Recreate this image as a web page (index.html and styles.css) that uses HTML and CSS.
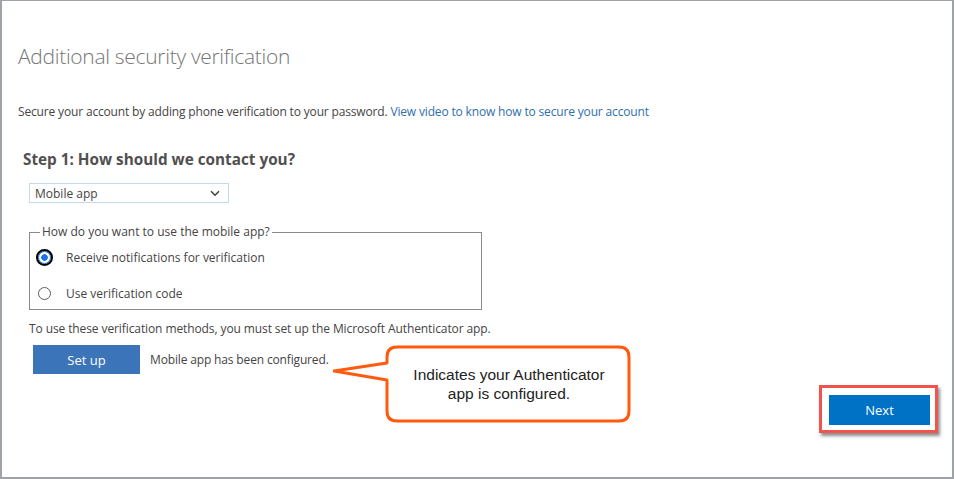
FILE: index.html
```html
<!DOCTYPE html>
<html lang="en">
<head>
<meta charset="utf-8">
<title>Additional security verification</title>
<link rel="stylesheet" href="styles.css">
</head>
<body>
<div class="frame">
  <h1 class="title">Additional security verification</h1>
  <p class="intro">Secure your account by adding phone verification to your password. <a href="#" class="link">View video to know how to secure your account</a></p>
  <div class="step">
    <h2 class="step-title">Step 1: How should we contact you?</h2>
    <div class="select">
      <span>Mobile app</span>
      <svg class="chev" width="10" height="7" viewBox="0 0 10 7"><path d="M1 1.2 L5 5.2 L9 1.2" fill="none" stroke="#444" stroke-width="1.6"/></svg>
    </div>
    <fieldset class="methods">
      <legend class="legend">How do you want to use the mobile app?</legend>
      <label class="option"><input type="radio" name="m" class="radio radio-on" checked> <span>Receive notifications for verification</span></label>
      <label class="option"><input type="radio" name="m" class="radio"> <span>Use verification code</span></label>
    </fieldset>
    <p class="note">To use these verification methods, you must set up the Microsoft Authenticator app.</p>
    <div class="setup-row">
      <button class="btn-setup">Set up</button>
      <span class="status">Mobile app has been configured.</span>
    </div>
  </div>
  <div class="footer">
    <div class="highlight"><button class="btn-next">Next</button></div>
  </div>
  <div class="callout">
    <svg class="callout-shape" width="300" height="82" viewBox="0 0 300 82">
      <path d="M64 2 H286 Q296 2 296 12 V66 Q296 76 286 76 H64 Q54 76 54 66 V35 L1 26 L54 18 V12 Q54 2 64 2 Z" fill="#fff" stroke="#ff5a0d" stroke-width="3" stroke-linejoin="round"/>
    </svg>
    <div class="callout-text">Indicates your Authenticator<br>app is configured.</div>
  </div>
</div>
</body>
</html>
```

FILE: styles.css
```css
html, body {
  margin: 0;
  padding: 0;
  background: #fff;
}
.frame {
  position: relative;
  box-sizing: border-box;
  width: 954px;
  height: 479px;
  border-top: 1px solid #9ea3a8;
  border-left: 2px solid #9ea3a8;
  border-right: 2px solid #9ea3a8;
  border-bottom: 2px solid #9ea3a8;
  padding: 0 0 0 16px;
  font-family: "Open Sans", "Noto Sans", sans-serif;
  color: #444;
}
.title {
  margin: 40px 0 0 0;
  font-size: 21px;
  line-height: 30px;
  font-weight: 300;
  letter-spacing: -0.3px;
  color: #767676;
}
.intro {
  margin: 32px 0 0 0;
  font-size: 12px;
  line-height: 18px;
  letter-spacing: -0.16px;
  color: #444;
}
.link {
  color: #2f6fad;
  text-decoration: none;
}
.step {
  padding-left: 5px;
}
.step-title {
  margin: 28px 0 0 0;
  font-size: 15.3px;
  line-height: 20px;
  font-weight: 700;
  color: #505050;
}
.select {
  margin: 14px 0 0 6px;
  box-sizing: border-box;
  width: 200px;
  height: 20px;
  border: 1px solid #c5d9ec;
  display: flex;
  align-items: center;
  justify-content: space-between;
  padding: 0 8px 0 5px;
  font-size: 12px;
  color: #444;
}
.methods {
  margin: 22px 0 0 6px;
  box-sizing: border-box;
  width: 453px;
  border: 1px solid #8a8a8a;
  padding: 0 0 1px 8px;
  display: flex;
  flex-direction: column;
  gap: 6px;
}
.legend {
  padding: 0 2px;
  margin-left: 2px;
  font-size: 12px;
  line-height: 14px;
  color: #444;
}
.option {
  display: flex;
  align-items: center;
  height: 30px;
  flex-shrink: 0;
  font-size: 12px;
  color: #444;
}
.option:first-of-type {
  margin-top: 3px;
}
.option span {
  margin-left: 15px;
}
.radio {
  appearance: none;
  -webkit-appearance: none;
  margin: 0;
  width: 13px;
  height: 13px;
  border-radius: 50%;
  border: 1px solid #5f5f5f;
  box-sizing: border-box;
  background: #fff;
}
.radio-on {
  border: 1.5px solid #1a73e8;
  background: radial-gradient(circle, #1a73e8 0 3px, #fff 3.5px);
  outline: 2px solid #000;
  outline-offset: 0;
}
.note {
  margin: 10px 0 0 6px;
  font-size: 12px;
  line-height: 18px;
  letter-spacing: -0.1px;
  color: #444;
}
.setup-row {
  margin-top: 7px;
  display: flex;
  align-items: center;
  gap: 10px;
}
.btn-setup {
  margin-left: 10px;
  width: 107px;
  height: 29px;
  border: none;
  background: #3b74b9;
  color: #fff;
  font-family: inherit;
  font-size: 13px;
}
.status {
  font-size: 12px;
  letter-spacing: -0.15px;
  color: #444;
}
.footer {
  display: flex;
  justify-content: flex-end;
  padding-right: 14px;
  margin-top: 11px;
}
.highlight {
  border: 3px solid #f2534a;
  padding: 7px 5px 5px 7px;
  background: #fff;
  box-shadow: 2px 3px 3px rgba(0, 0, 0, 0.45);
}
.btn-next {
  display: block;
  width: 101px;
  height: 30px;
  border: none;
  background: #0072c6;
  color: #fff;
  font-family: inherit;
  font-size: 13px;
}
.callout {
  position: absolute;
  left: 331px;
  top: 344px;
  width: 300px;
  height: 82px;
}
.callout-shape {
  position: absolute;
  left: 0;
  top: 0;
}
.callout-text {
  position: absolute;
  left: 56px;
  top: 20px;
  width: 240px;
  text-align: center;
  font-family: "Liberation Sans", Arial, sans-serif;
  font-size: 15.5px;
  line-height: 19px;
  color: #222;
}
```
